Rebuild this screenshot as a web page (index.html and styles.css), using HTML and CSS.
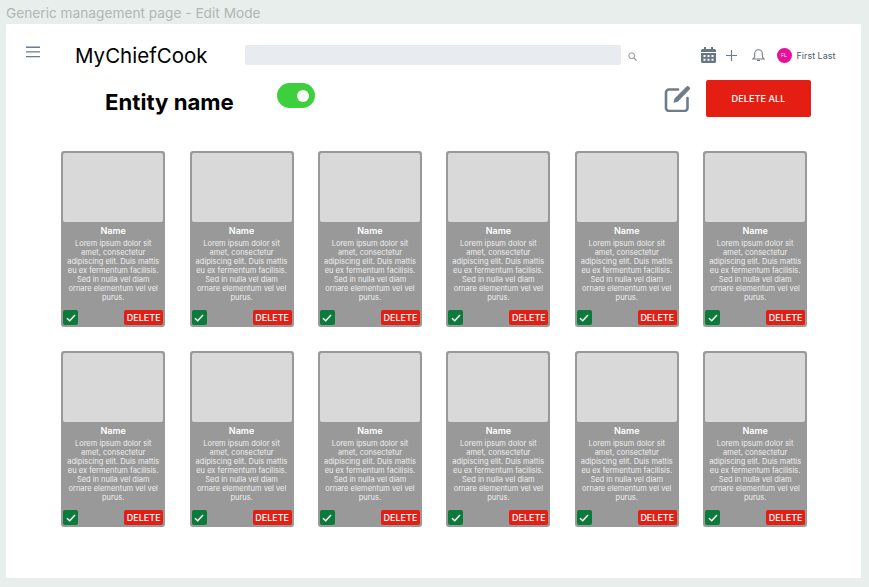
FILE: index.html
```html
<!DOCTYPE html>
<html>
<head>
  <meta charset="UTF-8">
  <meta name="viewport" content="width=device-width, initial-scale=1">
  <title>Generic management page - Edit Mode</title>
  <link rel="stylesheet" href="styles.css">
</head>
<body>

<div class="frame-title">Generic management page - Edit Mode</div>

<div class="panel">
  <header class="topbar">
    <svg class="menu-icon" width="14" height="12" viewBox="0 0 14 12"><path d="M0 1.2h14M0 5.9h14M0 10.6h14" stroke="#6b7a8c" stroke-width="1.4"/></svg>
    <div class="brand">MyChiefCook</div>
    <div class="search"></div>
    <svg class="search-icon" width="9" height="9" viewBox="0 0 9 9"><circle cx="3.7" cy="3.7" r="2.9" fill="none" stroke="#8a9196" stroke-width="1"/><path d="M5.9 5.9L8.6 8.6" stroke="#8a9196" stroke-width="1.2"/></svg>
    <div class="top-actions">
      <svg width="15" height="16" viewBox="0 0 15 16"><path d="M3 0h2v2h5V0h2v2h1.500A1.500 1.500 0 0 1 15 3.500V5H0V3.500A1.500 1.500 0 0 1 1.500 2H3zM0 6h15v8.500a1.500 1.500 0 0 1-1.500 1.500h-12A1.500 1.500 0 0 1 0 14.500z" fill="#687684"/><path d="M2.500 8h2v2h-2zM6.500 8h2v2h-2zM10.500 8h2v2h-2zM2.500 11.800h2v2h-2zM6.500 11.800h2v2h-2zM10.500 11.800h2v2h-2z" fill="#fff"/></svg>
      <svg class="plus-icon" width="11" height="11" viewBox="0 0 11 11"><path d="M5.500 0v11M0 5.500h11" stroke="#6f7d8b" stroke-width="1.200"/></svg>
      <svg class="bell-icon" width="13" height="14" viewBox="0 0 13 14"><path d="M1 11h11c-1.200-1-1.700-2-1.700-3.500V5.500a3.800 3.800 0 0 0-7.600 0v2C3 9 2.200 10 1 11z" fill="none" stroke="#6f7d8b" stroke-width="1.100"/><path d="M5 12.400h3" stroke="#6f7d8b" stroke-width="1.300"/></svg>
      <div class="user">
        <div class="avatar">FL</div>
        <span>First Last</span>
      </div>
    </div>
  </header>

  <div class="entity-bar">
    <h1>Entity name</h1>
    <div class="toggle"><div class="knob"></div></div>
    <svg class="edit-icon" width="27" height="27" viewBox="0 0 27 27"><path d="M14 4.500H5A3 3 0 0 0 2 7.500v15.500a3 3 0 0 0 3 3h15.500a3 3 0 0 0 3-3V13" fill="none" stroke="#6f7d8b" stroke-width="2.600" stroke-linecap="round"/><path d="M9.500 17.800l1-4.300L22.500 1.500a1.700 1.700 0 0 1 2.400 0l.7.7a1.700 1.700 0 0 1 0 2.400L13.800 16.800z" fill="#6f7d8b"/></svg>
    <button class="delete-all">DELETE ALL</button>
  </div>

  <div class="card-grid">
    <div class="card">
      <div class="card-img"></div>
      <div class="card-name">Name</div>
      <p class="card-text">Lorem ipsum dolor sit amet, consectetur adipiscing elit. Duis mattis eu ex fermentum facilisis. Sed in nulla vel diam ornare elementum vel vel purus.</p>
      <div class="card-foot">
        <div class="check"><svg width="10" height="8" viewBox="0 0 10 8"><path d="M1 4.200l2.700 2.500L9 1" fill="none" stroke="#fff" stroke-width="1.500"/></svg></div>
        <button class="delete">DELETE</button>
      </div>
    </div>
    <div class="card">
      <div class="card-img"></div>
      <div class="card-name">Name</div>
      <p class="card-text">Lorem ipsum dolor sit amet, consectetur adipiscing elit. Duis mattis eu ex fermentum facilisis. Sed in nulla vel diam ornare elementum vel vel purus.</p>
      <div class="card-foot">
        <div class="check"><svg width="10" height="8" viewBox="0 0 10 8"><path d="M1 4.200l2.700 2.500L9 1" fill="none" stroke="#fff" stroke-width="1.500"/></svg></div>
        <button class="delete">DELETE</button>
      </div>
    </div>
    <div class="card">
      <div class="card-img"></div>
      <div class="card-name">Name</div>
      <p class="card-text">Lorem ipsum dolor sit amet, consectetur adipiscing elit. Duis mattis eu ex fermentum facilisis. Sed in nulla vel diam ornare elementum vel vel purus.</p>
      <div class="card-foot">
        <div class="check"><svg width="10" height="8" viewBox="0 0 10 8"><path d="M1 4.200l2.700 2.500L9 1" fill="none" stroke="#fff" stroke-width="1.500"/></svg></div>
        <button class="delete">DELETE</button>
      </div>
    </div>
    <div class="card">
      <div class="card-img"></div>
      <div class="card-name">Name</div>
      <p class="card-text">Lorem ipsum dolor sit amet, consectetur adipiscing elit. Duis mattis eu ex fermentum facilisis. Sed in nulla vel diam ornare elementum vel vel purus.</p>
      <div class="card-foot">
        <div class="check"><svg width="10" height="8" viewBox="0 0 10 8"><path d="M1 4.200l2.700 2.500L9 1" fill="none" stroke="#fff" stroke-width="1.500"/></svg></div>
        <button class="delete">DELETE</button>
      </div>
    </div>
    <div class="card">
      <div class="card-img"></div>
      <div class="card-name">Name</div>
      <p class="card-text">Lorem ipsum dolor sit amet, consectetur adipiscing elit. Duis mattis eu ex fermentum facilisis. Sed in nulla vel diam ornare elementum vel vel purus.</p>
      <div class="card-foot">
        <div class="check"><svg width="10" height="8" viewBox="0 0 10 8"><path d="M1 4.200l2.700 2.500L9 1" fill="none" stroke="#fff" stroke-width="1.500"/></svg></div>
        <button class="delete">DELETE</button>
      </div>
    </div>
    <div class="card">
      <div class="card-img"></div>
      <div class="card-name">Name</div>
      <p class="card-text">Lorem ipsum dolor sit amet, consectetur adipiscing elit. Duis mattis eu ex fermentum facilisis. Sed in nulla vel diam ornare elementum vel vel purus.</p>
      <div class="card-foot">
        <div class="check"><svg width="10" height="8" viewBox="0 0 10 8"><path d="M1 4.200l2.700 2.500L9 1" fill="none" stroke="#fff" stroke-width="1.500"/></svg></div>
        <button class="delete">DELETE</button>
      </div>
    </div>
    <div class="card">
      <div class="card-img"></div>
      <div class="card-name">Name</div>
      <p class="card-text">Lorem ipsum dolor sit amet, consectetur adipiscing elit. Duis mattis eu ex fermentum facilisis. Sed in nulla vel diam ornare elementum vel vel purus.</p>
      <div class="card-foot">
        <div class="check"><svg width="10" height="8" viewBox="0 0 10 8"><path d="M1 4.200l2.700 2.500L9 1" fill="none" stroke="#fff" stroke-width="1.500"/></svg></div>
        <button class="delete">DELETE</button>
      </div>
    </div>
    <div class="card">
      <div class="card-img"></div>
      <div class="card-name">Name</div>
      <p class="card-text">Lorem ipsum dolor sit amet, consectetur adipiscing elit. Duis mattis eu ex fermentum facilisis. Sed in nulla vel diam ornare elementum vel vel purus.</p>
      <div class="card-foot">
        <div class="check"><svg width="10" height="8" viewBox="0 0 10 8"><path d="M1 4.200l2.700 2.500L9 1" fill="none" stroke="#fff" stroke-width="1.500"/></svg></div>
        <button class="delete">DELETE</button>
      </div>
    </div>
    <div class="card">
      <div class="card-img"></div>
      <div class="card-name">Name</div>
      <p class="card-text">Lorem ipsum dolor sit amet, consectetur adipiscing elit. Duis mattis eu ex fermentum facilisis. Sed in nulla vel diam ornare elementum vel vel purus.</p>
      <div class="card-foot">
        <div class="check"><svg width="10" height="8" viewBox="0 0 10 8"><path d="M1 4.200l2.700 2.500L9 1" fill="none" stroke="#fff" stroke-width="1.500"/></svg></div>
        <button class="delete">DELETE</button>
      </div>
    </div>
    <div class="card">
      <div class="card-img"></div>
      <div class="card-name">Name</div>
      <p class="card-text">Lorem ipsum dolor sit amet, consectetur adipiscing elit. Duis mattis eu ex fermentum facilisis. Sed in nulla vel diam ornare elementum vel vel purus.</p>
      <div class="card-foot">
        <div class="check"><svg width="10" height="8" viewBox="0 0 10 8"><path d="M1 4.200l2.700 2.500L9 1" fill="none" stroke="#fff" stroke-width="1.500"/></svg></div>
        <button class="delete">DELETE</button>
      </div>
    </div>
    <div class="card">
      <div class="card-img"></div>
      <div class="card-name">Name</div>
      <p class="card-text">Lorem ipsum dolor sit amet, consectetur adipiscing elit. Duis mattis eu ex fermentum facilisis. Sed in nulla vel diam ornare elementum vel vel purus.</p>
      <div class="card-foot">
        <div class="check"><svg width="10" height="8" viewBox="0 0 10 8"><path d="M1 4.200l2.700 2.500L9 1" fill="none" stroke="#fff" stroke-width="1.500"/></svg></div>
        <button class="delete">DELETE</button>
      </div>
    </div>
    <div class="card">
      <div class="card-img"></div>
      <div class="card-name">Name</div>
      <p class="card-text">Lorem ipsum dolor sit amet, consectetur adipiscing elit. Duis mattis eu ex fermentum facilisis. Sed in nulla vel diam ornare elementum vel vel purus.</p>
      <div class="card-foot">
        <div class="check"><svg width="10" height="8" viewBox="0 0 10 8"><path d="M1 4.200l2.700 2.500L9 1" fill="none" stroke="#fff" stroke-width="1.500"/></svg></div>
        <button class="delete">DELETE</button>
      </div>
    </div>
  </div>
</div>

</body>
</html>
```

FILE: styles.css
```css
* {
  box-sizing: border-box;
}

body {
  margin: 0;
  height: 587px;
  overflow: hidden;
  background: #e8eeeb;
  font-family: Inter, "Liberation Sans", sans-serif;
}

.frame-title {
  height: 24px;
  padding-left: 6px;
  font-size: 13.7px;
  line-height: 27px;
  color: #b1b6b3;
}

.panel {
  width: 855px;
  height: 554px;
  margin-left: 6px;
  padding-top: 21px;
  background: #fff;
}

.topbar {
  display: flex;
  align-items: center;
  height: 20px;
  padding-left: 20px;
}

.menu-icon {
  margin-top: -6px;
}

.brand {
  width: 170px;
  margin-left: 35px;
  font-size: 20.500px;
  color: #000;
}

.search {
  width: 376px;
  height: 20px;
  background: #e8ebf0;
  border-radius: 2px;
}

.search-icon {
  margin-left: 6.500px;
  margin-top: 2px;
}

.top-actions {
  display: flex;
  align-items: center;
  margin-left: 64px;
}

.plus-icon {
  margin-left: 10px;
}

.bell-icon {
  margin-left: 15px;
}

.user {
  display: flex;
  align-items: center;
  margin-left: 12px;
  font-size: 9px;
  color: #4d5a66;
}

.avatar {
  width: 15px;
  height: 15px;
  margin-right: 5px;
  border-radius: 50%;
  background: #e6109a;
  color: #fff;
  font-size: 5px;
  line-height: 15px;
  text-align: center;
}

.entity-bar {
  display: flex;
  align-items: flex-start;
  height: 52px;
  padding-top: 15px;
  padding-left: 99px;
}

.entity-bar h1 {
  width: 172px;
  margin: 10px 0 0;
  font-size: 22.200px;
  line-height: 24px;
  font-weight: 700;
  color: #000;
}

.toggle {
  display: flex;
  align-items: center;
  justify-content: flex-end;
  width: 38px;
  height: 25px;
  margin-top: 3px;
  padding-right: 6px;
  background: #3ecf3e;
  border-radius: 13px;
}

.knob {
  width: 12px;
  height: 12px;
  background: #fff;
  border-radius: 50%;
}

.edit-icon {
  margin-left: 349px;
  margin-top: 5px;
}

.delete-all {
  width: 105px;
  height: 37px;
  margin-left: 15px;
  border: none;
  border-radius: 2px;
  background: #e41e13;
  color: #fff;
  font-family: inherit;
  font-size: 9.200px;
  font-weight: 500;
}

.card-grid {
  display: grid;
  grid-template-columns: repeat(6, 104px);
  justify-content: space-between;
  row-gap: 24px;
  width: 746px;
  margin-left: 55.200px;
  margin-top: 34px;
}

.card {
  display: flex;
  flex-direction: column;
  height: 176px;
  padding: 2px;
  background: #999;
  border-radius: 3px;
  color: #fff;
}

.card-img {
  height: 69px;
  background: #d9d9d9;
  border-radius: 2px;
}

.card-name {
  margin-top: 3px;
  font-size: 9px;
  line-height: 12px;
  font-weight: 600;
  text-align: center;
}

.card-text {
  margin: 2px 4px 0;
  font-size: 7.500px;
  line-height: 9px;
  opacity: 0.85;
  text-align: center;
}

.card-foot {
  display: flex;
  justify-content: space-between;
  align-items: center;
  margin-top: auto;
}

.check {
  display: flex;
  align-items: center;
  justify-content: center;
  width: 15px;
  height: 15px;
  background: #0b7a3b;
  border-radius: 2px;
}

.delete {
  width: 39px;
  height: 15px;
  padding: 0;
  border: none;
  border-radius: 2px;
  background: #e41e13;
  color: #fff;
  font-family: inherit;
  font-size: 9px;
  font-weight: 500;
}
```
